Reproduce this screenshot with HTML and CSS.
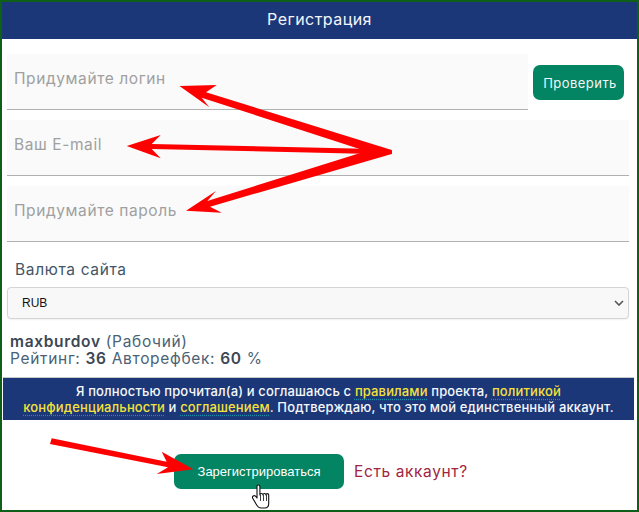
FILE: index.html
```html
<!DOCTYPE html>
<html lang="ru">
<head>
<meta charset="utf-8">
<title>Регистрация</title>
<link rel="stylesheet" href="styles.css">
</head>
<body>
<div class="frame">
  <header class="title">Регистрация</header>
  <form class="form">
    <div class="login-row">
      <div class="field field-login"><span>Придумайте логин</span></div>
      <button type="button" class="check">Проверить</button>
    </div>
    <div class="field field-wide"><span>Ваш E-mail</span></div>
    <div class="field field-wide"><span>Придумайте пароль</span></div>
    <div class="currency-label">Валюта сайта</div>
    <div class="select"><span>RUB</span>
      <svg class="chevron" width="10" height="6" viewBox="0 0 10 6"><path d="M1 1l4 4 4-4" fill="none" stroke="#555" stroke-width="1.6"/></svg>
    </div>
    <div class="referrer">
      <div><b class="semi">maxburdov</b> (Рабочий)</div>
      <div>Рейтинг: <b>36</b> Авторефбек: <b>60</b> %</div>
    </div>
    <div class="terms">Я полностью прочитал(а) и соглашаюсь с <a>правилами</a> проекта, <a>политикой конфиденциальности</a> и <a>соглашением</a>. Подтверждаю, что это мой единственный аккаунт.</div>
    <div class="actions">
      <button type="button" class="submit">Зарегистрироваться</button>
      <a class="signin">Есть аккаунт?</a>
    </div>
  </form>
  <svg class="overlay" width="639" height="512" viewBox="0 0 639 512">
    <g fill="#f00">
      <path d="M179.500 86L216.700 85L206 92.300L391.700 150L391.700 154L375 154L201.700 97.700L209.300 107.300Z"/>
      <path d="M126.700 146L160.700 135L151.700 144L375 149L391.700 151L391.700 154L373 154L151.700 149L160.700 158.300Z"/>
      <path d="M186 210.700L216 191L207.300 201L373 149L391.700 150L391.700 154L210 206.700L221.700 212.700Z"/>
      <path d="M193.300 469.300L161.700 451.700L166.700 461.700L51.700 438.300L50 444L168 467.300L156.700 474Z"/>
    </g>
    <path d="M257 486.500V498l-1.500-1.800c-1.500-1.400-3.800.2-2.800 2l3.500 6c1 1.800 2.500 3.800 5 3.800h3.500c2.500 0 4-2 4-4.500V495c0-1.800-2.500-1.800-2.800 0 0-2-2.700-2-3 0 0-2-2.800-1.800-3 0v-8.500c0-2-3-2-3 0Z" fill="#fff" stroke="#111" stroke-width="1.100" stroke-linejoin="round"/>
    <path d="M260.500 495v6M263.500 495v6M266.500 495v6" stroke="#111" stroke-width=".8" fill="none"/>
  </svg>
</div>
</body>
</html>
```
FILE: styles.css
```css
* { box-sizing: border-box; }
html, body { margin: 0; padding: 0; background: #fff; }
.frame {
  position: relative;
  width: 639px;
  height: 512px;
  overflow: hidden;
  border: 2px solid #0e5f17;
  font-family: Inter, "Noto Sans", sans-serif;
  color: #3c4a5a;
}
.title {
  height: 37px;
  background: #1b3778;
  color: #f4f6fa;
  font-size: 16px;
  line-height: 35px;
  text-align: center;
  letter-spacing: .46px;
}
.form { padding: 15px 0 0 5px; }
.login-row { display: flex; align-items: flex-start; }
.field {
  height: 56px;
  background: #fafafa;
  border-bottom: 1px solid #b0b0b0;
  padding: 16px 0 0 7px;
  color: #a0a0a0;
  font-size: 15.500px;
  line-height: 18px;
  letter-spacing: .59px;
}
.field-login { width: 521px; }
.field-wide { width: 622px; margin-top: 10px; }
.check {
  width: 91px;
  height: 35px;
  margin: 11px 0 0 5px;
  padding: 0 0 0 3px;
  border: 0;
  border-radius: 7px;
  background: #038462;
  color: #f5f5f5;
  font: 13px Inter, sans-serif;
  letter-spacing: .46px;
}
.currency-label {
  margin: 18px 0 0 8px;
  height: 20px;
  font-size: 15.500px;
  line-height: 20px;
  color: #425466;
  letter-spacing: .65px;
}
.select {
  display: flex;
  align-items: center;
  justify-content: space-between;
  width: 622px;
  height: 32px;
  margin-top: 7px;
  padding: 0 4px 0 14px;
  background: #f8f8f8;
  border: 1px solid #d4d4d4;
  border-radius: 4px;
  box-shadow: 0 1px 2px rgba(0,0,0,.06);
  font: 12px "Liberation Sans", sans-serif;
  color: #111;
}
.referrer {
  margin: 14px 0 0 3px;
  height: 35px;
  font-size: 15.500px;
  line-height: 17px;
  color: #4a6274;
  letter-spacing: .68px;
}
.referrer b { color: #3b4754; font-weight: 600; }
.terms {
  width: 631px;
  height: 43px;
  margin: 9px 0 0 -4px;
  padding: 5px 8px 0;
  background: #1b3778;
  border-top: 1px solid #c8c8c8;
  color: #f6f7fa;
  font-size: 13px;
  font-weight: 500;
  letter-spacing: .14px;
  line-height: 16px;
  text-align: center;
}
.terms a {
  color: #f6e23a;
  text-decoration: underline dotted #1c8ea8;
  text-underline-offset: 3px;
}
.actions {
  display: flex;
  align-items: center;
  margin: 34px 0 0 167px;
}
.submit {
  width: 170px;
  height: 35px;
  padding: 0;
  border: 0;
  border-radius: 7px;
  background: #038462;
  color: #fff;
  font: 13px "Liberation Sans", sans-serif;
}
.signin {
  margin-left: 10px;
  color: #a2243f;
  font-size: 15.500px;
  letter-spacing: .62px;
}
.overlay { position: absolute; left: -2px; top: -2px; pointer-events: none; }
```
